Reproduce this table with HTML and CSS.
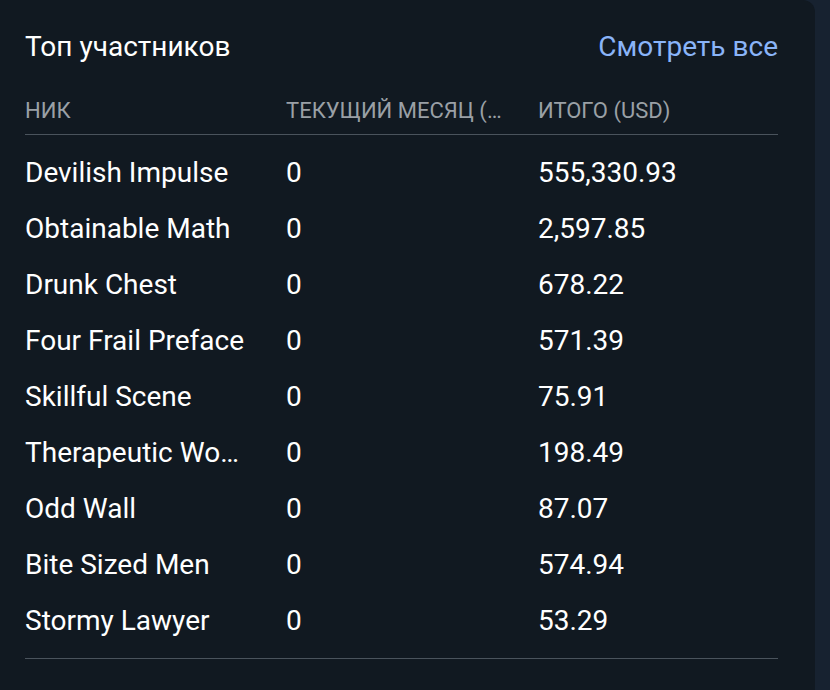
FILE: index.html
```html
<!DOCTYPE html>
<html lang="ru">
<head>
<meta charset="utf-8">
<title>Топ участников</title>
<link rel="stylesheet" href="styles.css">
</head>
<body>
<div class="page">
  <section class="card">
    <div class="head">
      <h2 class="title">Топ участников</h2>
      <a class="more" href="#">Смотреть все</a>
    </div>
    <div class="table">
      <div class="row thead">
        <div class="cell">Ник</div>
        <div class="cell">Текущий месяц (USD)</div>
        <div class="cell">Итого (USD)</div>
      </div>
      <div class="tbody">
        <div class="row"><div class="cell">Devilish Impulse</div><div class="cell">0</div><div class="cell">555,330.93</div></div>
        <div class="row"><div class="cell">Obtainable Math</div><div class="cell">0</div><div class="cell">2,597.85</div></div>
        <div class="row"><div class="cell">Drunk Chest</div><div class="cell">0</div><div class="cell">678.22</div></div>
        <div class="row"><div class="cell">Four Frail Preface</div><div class="cell">0</div><div class="cell">571.39</div></div>
        <div class="row"><div class="cell">Skillful Scene</div><div class="cell">0</div><div class="cell">75.91</div></div>
        <div class="row"><div class="cell">Therapeutic Women</div><div class="cell">0</div><div class="cell">198.49</div></div>
        <div class="row"><div class="cell">Odd Wall</div><div class="cell">0</div><div class="cell">87.07</div></div>
        <div class="row"><div class="cell">Bite Sized Men</div><div class="cell">0</div><div class="cell">574.94</div></div>
        <div class="row"><div class="cell">Stormy Lawyer</div><div class="cell">0</div><div class="cell">53.29</div></div>
      </div>
    </div>
  </section>
</div>
</body>
</html>
```
FILE: styles.css
```css
html, body {
  margin: 0;
  padding: 0;
  background: #172230;
  font-family: Roboto, "Noto Sans", sans-serif;
  color: #ffffff;
}

.page {
  width: 830px;
  height: 690px;
  overflow: hidden;
}

.card {
  width: 815px;
  min-height: 720px;
  box-sizing: border-box;
  background: #111921;
  border-top-right-radius: 12px;
  padding: 24px 37px 0 25px;
}

.head {
  display: flex;
  justify-content: space-between;
  align-items: center;
  height: 46px;
}

.title {
  margin: 0;
  font-size: 28px;
  font-weight: 400;
  line-height: 46px;
  color: #ffffff;
}

.more {
  font-size: 28px;
  line-height: 46px;
  color: #8ab4f8;
  text-decoration: none;
}

.row {
  display: grid;
  grid-template-columns: 261px 252px 1fr;
  align-items: center;
  height: 56px;
  font-size: 28px;
}

.cell {
  white-space: nowrap;
  overflow: hidden;
  text-overflow: ellipsis;
  padding-right: 28px;
}

.thead {
  height: 30px;
  padding: 25px 0 9px;
  border-bottom: 1px solid #4a535c;
  font-size: 22px;
  text-transform: uppercase;
  color: #9aa0a6;
}

.thead .cell {
  padding-right: 24px;
}

.tbody {
  padding: 9px 0 10px;
  border-bottom: 1px solid #4a535c;
}
```
